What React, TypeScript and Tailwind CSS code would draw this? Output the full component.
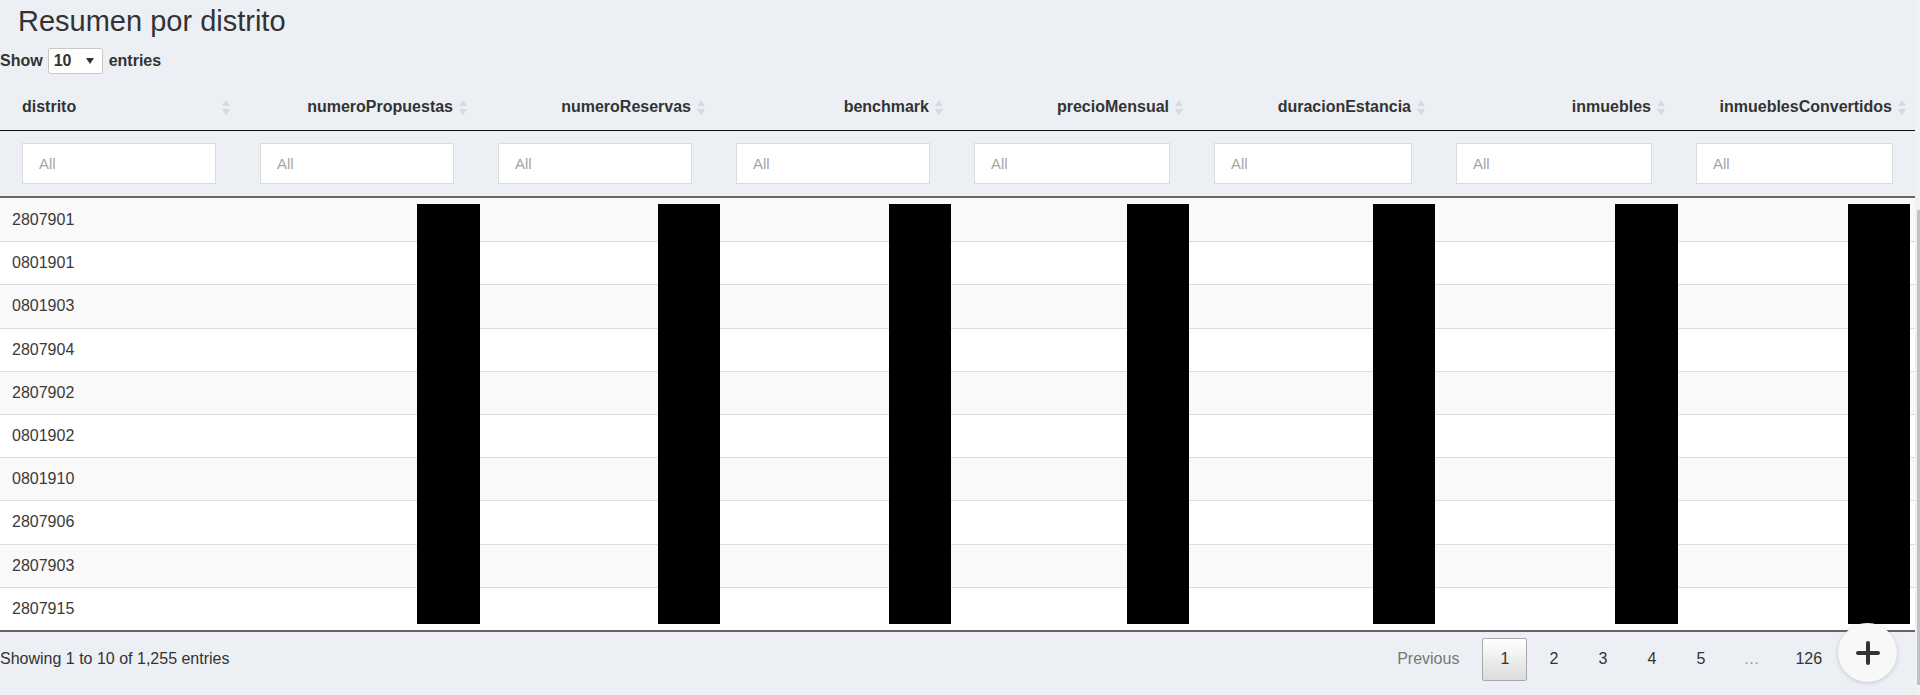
import React from "react";

const columns = [
  "distrito",
  "numeroPropuestas",
  "numeroReservas",
  "benchmark",
  "precioMensual",
  "duracionEstancia",
  "inmuebles",
  "inmueblesConvertidos",
];

const rows = [
  "2807901",
  "0801901",
  "0801903",
  "2807904",
  "2807902",
  "0801902",
  "0801910",
  "2807906",
  "2807903",
  "2807915",
];

// redaction boxes laid over the numeric columns
const redactions = [
  "left-[417px] w-[63px]",
  "left-[658px] w-[62px]",
  "left-[889px] w-[62px]",
  "left-[1127px] w-[62px]",
  "left-[1373px] w-[62px]",
  "left-[1615px] w-[63px]",
  "left-[1848px] w-[62px]",
];

const gridCols =
  "grid grid-cols-[238px_238px_238px_238px_240px_242px_240px_1fr]";

function SortIcon() {
  return (
    <svg width="8" height="15" viewBox="0 0 8 15" className="shrink-0">
      <path d="M4 0 L8 6 L0 6 Z" fill="#d6dade" />
      <path d="M4 15 L8 9 L0 9 Z" fill="#d6dade" />
    </svg>
  );
}

function PageButton({
  label,
  active,
  className = "",
}: {
  label: string;
  active?: boolean;
  className?: string;
}) {
  return (
    <span
      className={
        active
          ? `flex h-[43px] w-[45px] items-center justify-center rounded-[2px] border border-[#a9a9a9] bg-gradient-to-b from-white to-[#dcdcdc] text-[#333] ${className}`
          : `flex h-[43px] w-[45px] items-center justify-center text-[#333] ${className}`
      }
    >
      {label}
    </span>
  );
}

export default function App() {
  return (
    <div className="relative flex h-[695px] w-[1920px] overflow-hidden bg-[#ecf0f5] font-['Liberation_Sans',Arial,sans-serif] text-[#333]">
      <div className="flex w-[1915px] flex-col">
        <h2 className="pl-[18px] pt-[3px] text-[29px] font-normal leading-[37px] text-[#333]">
          Resumen por distrito
        </h2>

        <div className="mt-2 flex h-[26px] items-center text-[16px] font-bold">
          <span>Show</span>
          <div className="ml-[5px] flex h-[26px] w-[55px] items-center justify-between rounded-[2px] border border-[#c8c8c8] bg-white pl-[5px] pr-[8px]">
            <span>10</span>
            <svg width="8" height="6" viewBox="0 0 8 6">
              <path d="M0 0 L8 0 L4 6 Z" fill="#333" />
            </svg>
          </div>
          <span className="ml-[6px]">entries</span>
        </div>

        <div className={`${gridCols} mt-[10px] border-b border-[#111]`}>
          {columns.map((c, i) => (
            <div
              key={c}
              className={
                i === 0
                  ? "flex h-[46px] items-center justify-between pl-[22px] pr-[8px] text-[16px] font-bold"
                  : "flex h-[46px] items-center justify-end gap-[6px] pl-[22px] pr-[9px] text-[16px] font-bold"
              }
            >
              <span>{c}</span>
              <SortIcon />
            </div>
          ))}
        </div>

        <div className={`${gridCols} h-[67px] border-b-2 border-[#666]`}>
          {columns.map((c) => (
            <div key={c} className="px-[22px] pt-[12px]">
              <input
                readOnly
                placeholder="All"
                className="h-[41px] w-full border border-[#dcdcdc] bg-white pl-[16px] text-[15px] outline-none placeholder:text-[#a5a5a5]"
              />
            </div>
          ))}
        </div>

        <div className="relative border-b-2 border-[#666]">
          {rows.map((r, i) => (
            <div
              key={r}
              className={
                i % 2 === 0
                  ? `flex h-[43.2px] items-center bg-[#f9f9f9] pl-[12px] text-[16px] text-[#3a3a3a] ${i > 0 ? "border-t border-[#ddd]" : ""}`
                  : "flex h-[43.2px] items-center border-t border-[#ddd] bg-white pl-[12px] text-[16px] text-[#3a3a3a]"
              }
            >
              {r}
            </div>
          ))}
          {redactions.map((cls) => (
            <div key={cls} className={`absolute top-[6px] h-[420px] bg-black ${cls}`} />
          ))}
        </div>

        <div className="mt-[6px] flex h-[43px] items-center justify-between pr-[8px] text-[16px]">
          <span>Showing 1 to 10 of 1,255 entries</span>
          <div className="flex items-center gap-[4px]">
            <span className="mr-[3px] flex h-[43px] items-center px-4 text-[#777]">
              Previous
            </span>
            <PageButton label="1" active />
            <PageButton label="2" />
            <PageButton label="3" />
            <PageButton label="4" />
            <PageButton label="5" />
            <span className="flex h-[43px] items-center px-4 text-[#999]">…</span>
            <span className="flex h-[43px] items-center px-4">126</span>
            <span className="flex h-[43px] items-center px-4">Next</span>
          </div>
        </div>
      </div>

      <div className="w-[5px] bg-[#f1f1f1]">
        <div className="ml-auto mt-[210px] h-[475px] w-[3px] bg-[#c1c1c1]" />
      </div>

      <button className="absolute left-[1838px] top-[623px] flex h-[59px] w-[59px] items-center justify-center rounded-full bg-[#f8f8f8] shadow-[0_1px_4px_rgba(0,0,0,0.18)]">
        <svg width="24" height="24" viewBox="0 0 24 24">
          <path d="M12 2 V22 M2 12 H22" stroke="#333" strokeWidth="4" strokeLinecap="round" />
        </svg>
      </button>
    </div>
  );
}
